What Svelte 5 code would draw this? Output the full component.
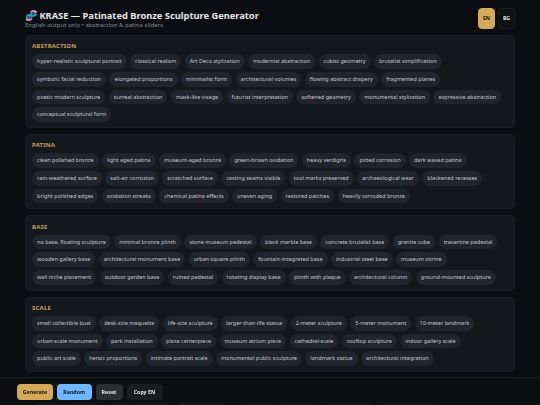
<script>
	const sections = [
		{
			title: 'Abstraction',
			chips: ['hyper-realistic sculptural portrait', 'classical realism', 'Art Deco stylization', 'modernist abstraction', 'cubist geometry', 'brutalist simplification', 'symbolic facial reduction', 'elongated proportions', 'minimalist form', 'architectural volumes', 'flowing abstract drapery', 'fragmented planes', 'poetic modern sculpture', 'surreal abstraction', 'mask-like visage', 'futurist interpretation', 'softened geometry', 'monumental stylization', 'expressive abstraction', 'conceptual sculptural form']
		},
		{
			title: 'Patina',
			chips: ['clean polished bronze', 'light aged patina', 'museum-aged bronze', 'green-brown oxidation', 'heavy verdigris', 'pitted corrosion', 'dark waxed patina', 'rain-weathered surface', 'salt-air corrosion', 'scratched surface', 'casting seams visible', 'tool marks preserved', 'archaeological wear', 'blackened recesses', 'bright polished edges', 'oxidation streaks', 'chemical patina effects', 'uneven aging', 'restored patches', 'heavily corroded bronze']
		},
		{
			title: 'Base',
			chips: ['no base, floating sculpture', 'minimal bronze plinth', 'stone museum pedestal', 'black marble base', 'concrete brutalist base', 'granite cube', 'travertine pedestal', 'wooden gallery base', 'architectural monument base', 'urban square plinth', 'fountain-integrated base', 'industrial steel base', 'museum vitrine', 'wall niche placement', 'outdoor garden base', 'ruined pedestal', 'rotating display base', 'plinth with plaque', 'architectural column', 'ground-mounted sculpture']
		},
		{
			title: 'Scale',
			chips: ['small collectible bust', 'desk-size maquette', 'life-size sculpture', 'larger-than-life statue', '2-meter sculpture', '5-meter monument', '10-meter landmark', 'urban-scale monument', 'park installation', 'plaza centerpiece', 'museum atrium piece', 'cathedral-scale', 'rooftop sculpture', 'indoor gallery scale', 'public art scale', 'heroic proportions', 'intimate portrait scale', 'monumental public sculpture', 'landmark statue', 'architectural integration']
		},
		{
			title: 'Lighting',
			chips: ['soft museum spotlight', 'dramatic side lighting', 'neutral gallery light', 'high-contrast studio lighting', 'natural daylight', 'golden hour sunlight', 'overcast diffuse light']
		}
	];
</script>

<div class="page">
	<header>
		<div>
			<h1><span class="logo">🧬</span> KRASE — Patinated Bronze Sculpture Generator</h1>
			<p>English output only • abstraction &amp; patina sliders</p>
		</div>
		<div class="langs">
			<button class="lang on">EN</button>
			<button class="lang">BG</button>
		</div>
	</header>

	{#each sections as section}
		<section>
			<h2>{section.title}</h2>
			<div class="chips">
				{#each section.chips as chip}
					<span class="chip">{chip}</span>
				{/each}
			</div>
		</section>
	{/each}
</div>

<footer>
	<button class="gold">Generate</button>
	<button class="blue">Random</button>
	<button class="grey">Reset</button>
	<button class="dark">Copy EN</button>
</footer>

<style>
	:global(body) {
		background: #0b0d10;
		color: #e6e6e6;
		font-family: 'Noto Sans', sans-serif;
		overflow: hidden;
	}
	.page {
		height: 405px;
		overflow: hidden;
		padding: 9px 25px 0;
		box-sizing: border-box;
	}
	header {
		display: flex;
		justify-content: space-between;
		align-items: flex-start;
		height: 26px;
	}
	h1 {
		margin: 0;
		font-size: 9.3px;
		line-height: 13px;
		font-weight: 700;
	}
	.logo {
		font-size: 10px;
	}
	header p {
		margin: 0;
		font-size: 6.05px;
		line-height: 7px;
		color: #858a92;
	}
	.langs {
		display: flex;
		gap: 3px;
		margin-top: -1px;
	}
	.lang {
		width: 17px;
		height: 20.5px;
		padding: 0;
		border: 1px solid #181b20;
		border-radius: 4px;
		background: #0e1013;
		color: #e6e6e6;
		font: 700 5.2px 'Noto Sans', sans-serif;
	}
	.lang.on {
		background: #d4a95a;
		border-color: #d4a95a;
		color: #1a1408;
	}
	section {
		background: #14171c;
		border: 1px solid #1b1e24;
		border-radius: 5px;
		padding: 6.3px 6px 5px;
		margin-bottom: 6.1px;
		box-sizing: border-box;
	}
	h2 {
		margin: 0 0 4px;
		font-size: 6px;
		line-height: 8px;
		font-weight: 700;
		letter-spacing: 0.2px;
		text-transform: uppercase;
		color: #c4a05c;
	}
	.chips {
		display: flex;
		flex-wrap: wrap;
		gap: 3.1px 3.4px;
	}
	.chip {
		height: 14.6px;
		line-height: 14.6px;
		padding: 0 5px;
		border-radius: 8px;
		background: #20242c;
		color: #c5c8ce;
		font-size: 5.5px;
		white-space: nowrap;
	}
	footer {
		position: fixed;
		left: 0;
		right: 0;
		bottom: 0;
		height: 28px;
		display: flex;
		align-items: center;
		gap: 4px;
		padding: 0 17px;
		box-sizing: border-box;
		background: rgba(11, 13, 16, 0.9);
		border-top: 1px solid #181b20;
	}
	footer button {
		height: 16px;
		padding: 0;
		border-radius: 4px;
		border: 1px solid transparent;
		font: 700 5.3px 'Noto Sans', sans-serif;
	}
	.gold {
		width: 36px;
		background: #d4a95a;
		color: #1a1408;
	}
	.blue {
		width: 34.5px;
		background: #6db8ff;
		color: #0b1a2a;
	}
	.grey {
		width: 27px;
		background: #2b2d31;
		color: #e6e6e6;
	}
	.dark {
		width: 36px;
		background: #1a1c20;
		color: #e6e6e6;
	}
</style>
